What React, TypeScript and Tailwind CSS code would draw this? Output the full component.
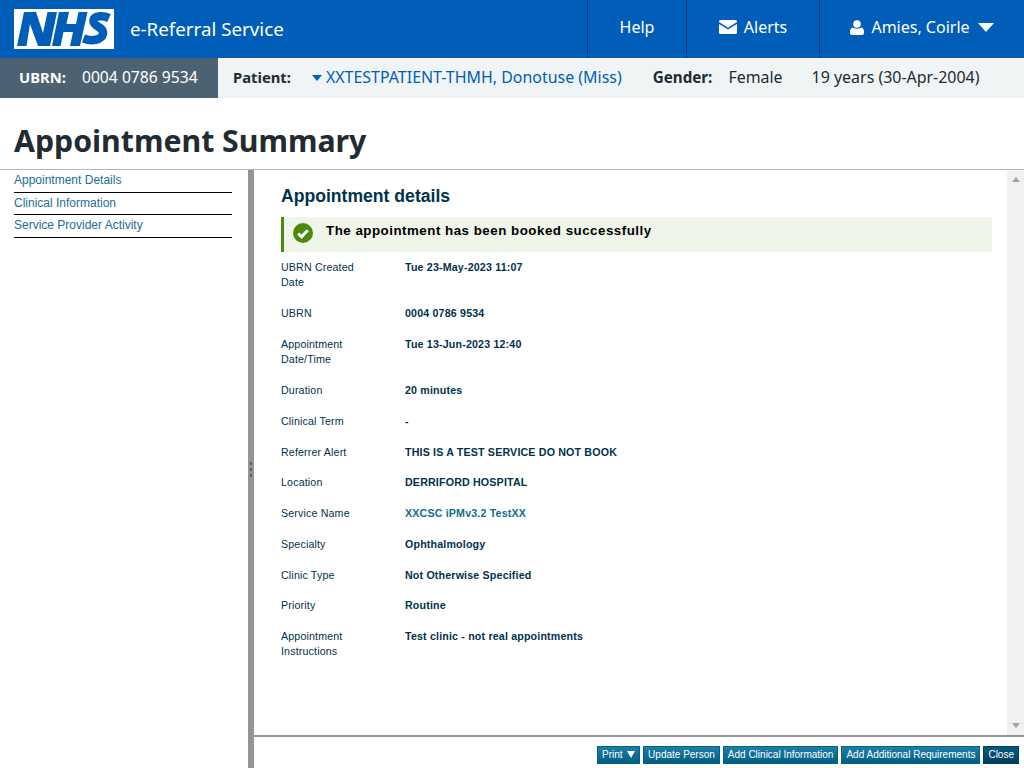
const rows: { label: string[]; value: string; link?: boolean }[] = [
  { label: ["UBRN Created", "Date"], value: "Tue 23-May-2023 11:07" },
  { label: ["UBRN"], value: "0004 0786 9534" },
  { label: ["Appointment", "Date/Time"], value: "Tue 13-Jun-2023 12:40" },
  { label: ["Duration"], value: "20 minutes" },
  { label: ["Clinical Term"], value: "-" },
  { label: ["Referrer Alert"], value: "THIS IS A TEST SERVICE DO NOT BOOK" },
  { label: ["Location"], value: "DERRIFORD HOSPITAL" },
  { label: ["Service Name"], value: "XXCSC iPMv3.2 TestXX", link: true },
  { label: ["Specialty"], value: "Ophthalmology" },
  { label: ["Clinic Type"], value: "Not Otherwise Specified" },
  { label: ["Priority"], value: "Routine" },
  { label: ["Appointment", "Instructions"], value: "Test clinic - not real appointments" },
];

const navLinks = ["Appointment Details", "Clinical Information", "Service Provider Activity"];

const buttons = ["Update Person", "Add Clinical Information", "Add Additional Requirements"];

function TopNavItem({ children, className }: { children: React.ReactNode; className: string }) {
  return (
    <div className={`flex h-full items-center justify-center gap-[7px] border-l border-[#003d78] pb-[4px] ${className}`}>
      {children}
    </div>
  );
}

export default function App() {
  return (
    <div className="flex h-[768px] w-[1024px] flex-col overflow-hidden bg-white font-['Liberation_Sans',sans-serif]">
      <header className="flex h-[58px] shrink-0 items-center bg-[#005eb8] font-['Noto_Sans',sans-serif] text-white">
        <div className="ml-[14px] h-[40px] w-[100px] bg-white">
          <svg viewBox="0 0 100 40" className="h-[40px] w-[100px]">
            <path fill="#005eb8" d="M10 3h12l7 21 4.500-21H43l-7 34H24l-8-22-3.500 22H3z" />
            <path fill="#005eb8" d="M45 3h10l-2.500 12h9.500L64.500 3h9L66 37H56l3-14h-9.500l-3 14H38z" />
            <path
              fill="none"
              stroke="#005eb8"
              strokeWidth="8.500"
              d="M95 9c-5-2.200-14.500-3-15.500 2.500-1 6.500 10.500 5.500 9.500 13-1 7-12 8-19.500 5"
            />
          </svg>
        </div>
        <div className="ml-[16px] text-[18.750px] leading-none">e-Referral Service</div>
        <div className="ml-auto flex h-full text-[16px]">
          <TopNavItem className="w-[99px]">Help</TopNavItem>
          <TopNavItem className="w-[133px]">
            <svg viewBox="0 0 18 14" className="h-[14px] w-[18px]" fill="white">
              <path d="M1.500 0h15A1.500 1.500 0 0 1 18 1.500v.6L9 7.700 0 2.100v-.6A1.500 1.500 0 0 1 1.500 0z" />
              <path d="M0 3.900l9 5.600 9-5.600v8.600a1.500 1.500 0 0 1-1.500 1.500h-15A1.500 1.500 0 0 1 0 12.500z" />
            </svg>
            Alerts
          </TopNavItem>
          <TopNavItem className="w-[205px]">
            <svg viewBox="0 0 14 15" className="h-[15px] w-[14px]" fill="white">
              <circle cx="7" cy="4" r="3.800" />
              <path d="M2.500 7.500C4 9 10 9 11.500 7.500 13 8 14 9.500 14 11.500v1.500c0 1-.8 2-2 2H2c-1.200 0-2-1-2-2v-1.500C0 9.500 1 8 2.500 7.500z" />
            </svg>
            Amies, Coirle
            <svg viewBox="0 0 16 9" className="ml-[1px] h-[9px] w-[16px]" fill="white">
              <path d="M0 0h16L8 9z" />
            </svg>
          </TopNavItem>
        </div>
      </header>

      <div className="flex h-[40px] shrink-0 items-center bg-[#f0f4f5] font-['Noto_Sans',sans-serif] text-[15.950px] leading-[22px] text-[#212b32]">
        <div className="flex h-full w-[218px] items-center bg-[#4c6272] pl-[19px] text-white">
          <span className="mb-[2px] text-[14.800px] font-bold">UBRN:</span>
          <span className="mb-[2px] ml-[16px] text-[15.700px]">0004 0786 9534</span>
        </div>
        <span className="mb-[2px] ml-[15px] text-[14.800px] font-bold">Patient:</span>
        <svg viewBox="0 0 10 6" className="ml-[21px] h-[6px] w-[10px]" fill="#005eb8">
          <path d="M0 0h10L5 6z" />
        </svg>
        <span className="mb-[2px] ml-[4px] text-[#005eb8]">XXTESTPATIENT-THMH, Donotuse (Miss)</span>
        <span className="mb-[2px] ml-[31px] text-[15.200px] font-bold">Gender:</span>
        <span className="mb-[2px] ml-[16px]">Female</span>
        <span className="mb-[2px] ml-[29px]">19 years (30-Apr-2004)</span>
      </div>

      <div className="flex h-[72px] shrink-0 items-center border-b border-[#aeb7bd] pl-[14px] pt-[15px]">
        <h1 className="font-['Noto_Sans',sans-serif] text-[30.250px] leading-none font-bold text-[#212b32]">
          Appointment Summary
        </h1>
      </div>

      <div className="flex min-h-0 flex-1">
        <nav className="w-[248px] shrink-0 pl-[14px] pr-[16px] text-[12px] text-[#1d6d94]">
          {navLinks.map((link) => (
            <div key={link} className="h-[22.500px] border-b border-black pt-[3px] leading-[15px]">
              {link}
            </div>
          ))}
        </nav>

        <div className="flex w-[6px] shrink-0 flex-col items-center justify-center gap-[3px] bg-[#949499]">
          <span className="h-[3px] w-[2px] bg-[#5f5f64]" />
          <span className="h-[3px] w-[2px] bg-[#5f5f64]" />
          <span className="h-[3px] w-[2px] bg-[#5f5f64]" />
        </div>

        <div className="flex min-w-0 flex-1 flex-col">
          <div className="flex min-h-0 flex-1">
            <main className="min-w-0 flex-1 pl-[27px] pr-[15px] pt-[16px] text-[#00324b]">
              <h2 className="text-[17.600px] leading-[21px] font-bold">Appointment details</h2>
              <div className="mt-[10px] mb-[8px] flex h-[35px] items-center border-l-[3px] border-[#4c8a0c] bg-[#eff5e9] pl-[9px] pb-[4px]">
                <svg viewBox="0 0 20 20" className="h-[20px] w-[20px]">
                  <circle cx="10" cy="10" r="10" fill="#4c8a0c" />
                  <path d="M5.200 10.500l3.300 3.300 6.300-6.500" fill="none" stroke="white" strokeWidth="3" />
                </svg>
                <span className="mb-[3px] ml-[13px] text-[13.330px] font-bold tracking-[0.5px] text-black">
                  The appointment has been booked successfully
                </span>
              </div>
              <div className="text-[10.670px] leading-[15.380px]">
                {rows.map((row) => (
                  <div key={row.value} className="flex pb-[15.380px]">
                    <div className="w-[124px] shrink-0 tracking-[0.15px]">
                      {row.label.map((line) => (
                        <div key={line}>{line}</div>
                      ))}
                    </div>
                    <div className={`font-bold tracking-[0.17px] ${row.link ? "text-[#0f6c8e]" : ""}`}>{row.value}</div>
                  </div>
                ))}
              </div>
            </main>
            <div className="flex w-[17px] shrink-0 flex-col items-center justify-between bg-[#f1f1f1] py-[7px]">
              <svg viewBox="0 0 8 5" className="h-[5px] w-[8px]" fill="#a3a3a3">
                <path d="M4 0l4 5H0z" />
              </svg>
              <svg viewBox="0 0 8 5" className="h-[5px] w-[8px]" fill="#a3a3a3">
                <path d="M0 0h8L4 5z" />
              </svg>
            </div>
          </div>
          <div className="flex h-[33px] shrink-0 items-center justify-end gap-[3px] border-t-2 border-[#949499] pl-[4px] pr-[5px] pt-[4px] text-[10px] text-white">
            <button className="flex h-[18px] items-center gap-[4px] border border-[#0b5f82] bg-gradient-to-b from-[#1d7ea8] to-[#005f83] px-[4.500px]">
              Print
              <svg viewBox="0 0 8 7" className="h-[7px] w-[8px]" fill="white">
                <path d="M0 0h8L4 7z" />
              </svg>
            </button>
            {buttons.map((b) => (
              <button key={b} className="flex h-[18px] items-center border border-[#0b5f82] bg-gradient-to-b from-[#1d7ea8] to-[#005f83] px-[4px]">
                {b}
              </button>
            ))}
            <button className="flex h-[18px] items-center border border-[#003f5c] bg-gradient-to-b from-[#0a5a7e] to-[#003e5a] px-[4px]">
              Close
            </button>
          </div>
        </div>
      </div>
    </div>
  );
}
